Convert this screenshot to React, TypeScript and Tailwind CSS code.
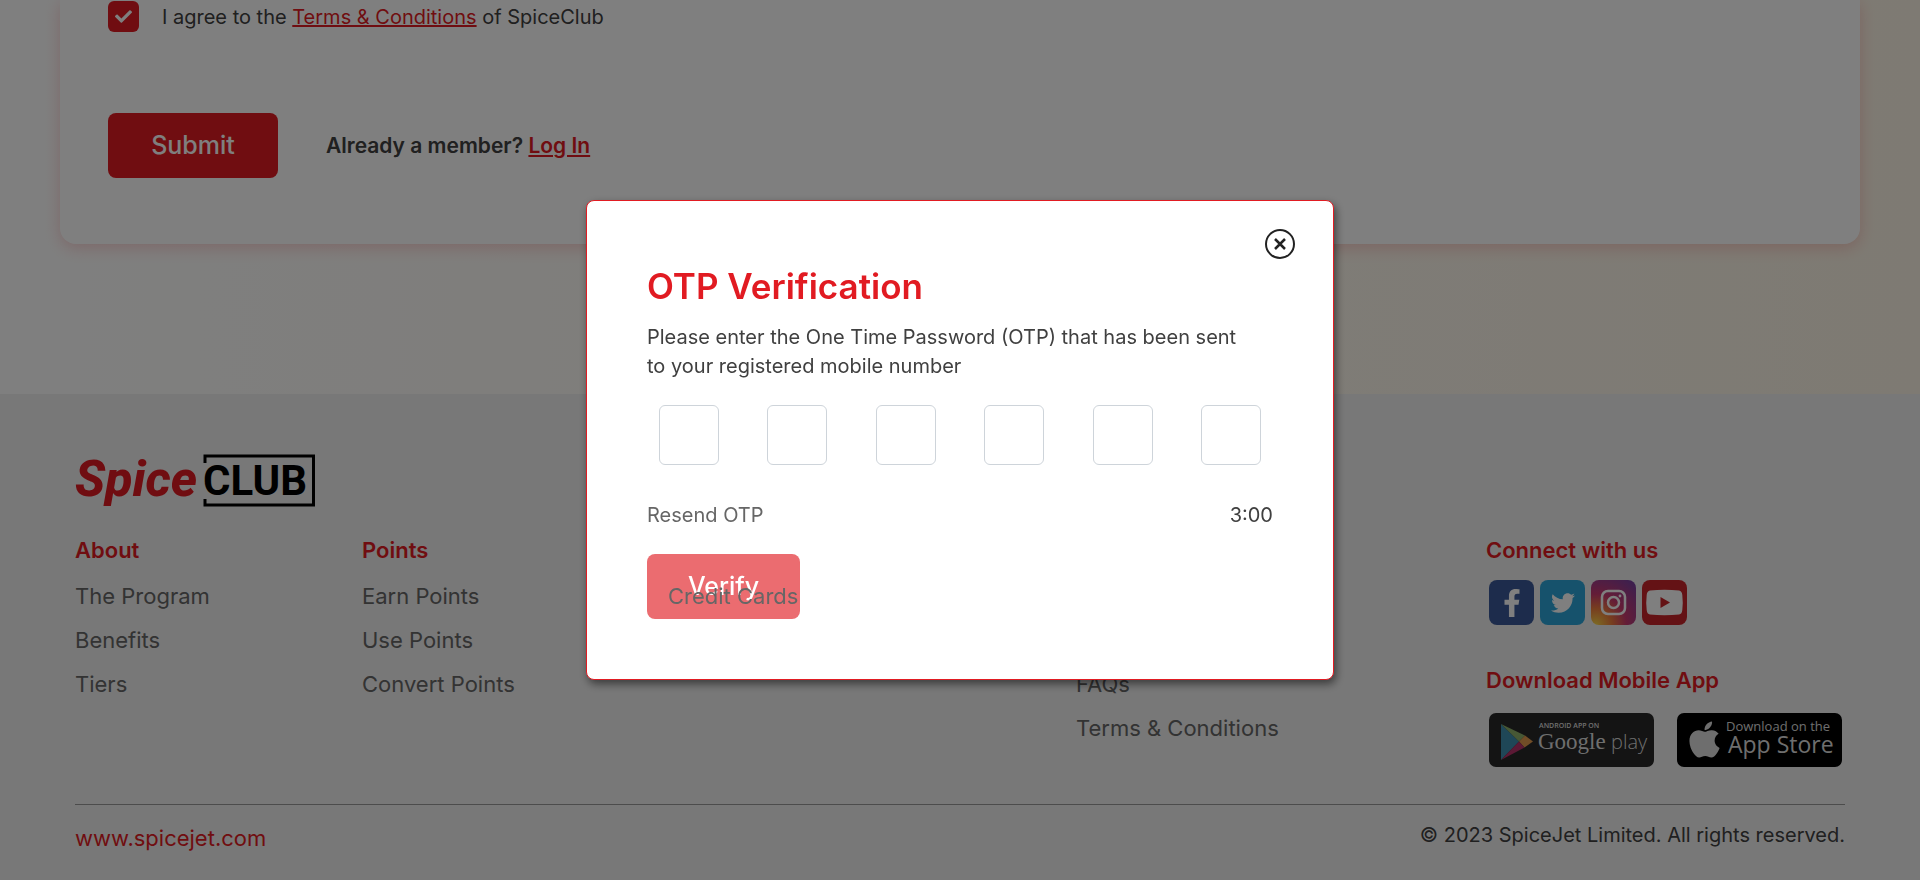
import React from "react";
import { FaApple, FaCheck, FaFacebookF, FaTwitter } from "react-icons/fa";

function FooterLink({ children, raised }: { children: React.ReactNode; raised?: boolean }) {
  return (
    <li className={raised ? "relative z-50" : ""}>
      <a href="#" className="whitespace-nowrap text-[#666]">
        {children}
      </a>
    </li>
  );
}

function Heading({ children }: { children: React.ReactNode }) {
  return <h3 className="text-[22px] leading-8 font-semibold text-[#e11b22]">{children}</h3>;
}

function Logo() {
  return (
    <svg width="242" height="60" viewBox="0 0 242 60" role="img" aria-label="SpiceClub">
      <text x="0" y="43" fontSize="50" fontWeight="800" fontStyle="italic" fill="#e11b22" fontFamily="Roboto, 'Liberation Sans', sans-serif">
        Spice
      </text>
      <path d="M130 10V3h108.500v49H130v-6" fill="none" stroke="#000" strokeWidth="3" />
      <text x="128" y="42" fontSize="42" fontWeight="700" fill="#000" fontFamily="Roboto, 'Liberation Sans', sans-serif">
        CLUB
      </text>
    </svg>
  );
}

function InstagramIcon() {
  return (
    <svg width="45" height="45" viewBox="0 0 45 45" aria-hidden="true">
      <defs>
        <radialGradient id="ig" cx="0.1" cy="1" r="1.25">
          <stop offset="0" stopColor="#f9d648" />
          <stop offset="0.3" stopColor="#ee7a3e" />
          <stop offset="0.55" stopColor="#c8396f" />
          <stop offset="1" stopColor="#7a3f9d" />
        </radialGradient>
      </defs>
      <rect width="45" height="45" rx="8" fill="url(#ig)" />
      <rect x="11" y="11" width="23" height="23" rx="6" fill="none" stroke="#fff" strokeWidth="2.500" />
      <circle cx="22.500" cy="22.500" r="5.500" fill="none" stroke="#fff" strokeWidth="2.500" />
      <circle cx="29" cy="16" r="1.400" fill="#fff" />
    </svg>
  );
}

function YoutubeIcon() {
  return (
    <svg width="45" height="45" viewBox="0 0 45 45" aria-hidden="true">
      <rect width="45" height="45" rx="8" fill="#c9252a" />
      <path d="M8 10.500Q22.500 9 37 10.500Q40 11 40.300 15Q41.200 22.500 40.300 30Q40 34 37 34.500Q22.500 36 8 34.500Q5 34 4.700 30Q3.800 22.500 4.700 15Q5 11 8 10.500Z" fill="#fff" />
      <path d="M18.500 17v11l9.500-5.500z" fill="#c9252a" />
    </svg>
  );
}

function GooglePlayBadge() {
  return (
    <svg width="165" height="54" viewBox="0 0 165 54" role="img" aria-label="Android app on Google play">
      <rect width="165" height="54" rx="7" fill="#282828" />
      <path d="M12 11v36l18-18.500z" fill="#3f8fae" />
      <path d="M12 11l18 17.500 6-6z" fill="#8fb06a" />
      <path d="M36 22.500l8 6-8.500 6-5.500-6z" fill="#e39a4e" />
      <path d="M12 47l18-18.500 5.500 6z" fill="#b8336a" />
      <text x="50" y="15" fontSize="7" fontWeight="600" fill="#ddd" fontFamily="'Open Sans', sans-serif">
        ANDROID APP ON
      </text>
      <text x="49" y="36" fontSize="23" fill="#ddd" fontFamily="'Liberation Serif', serif">
        Google
      </text>
      <text x="122" y="36" fontSize="20" fontWeight="300" fill="#ddd" fontFamily="'Open Sans', sans-serif">
        play
      </text>
    </svg>
  );
}

function AppStoreBadge() {
  return (
    <svg width="165" height="54" viewBox="0 0 165 54" role="img" aria-label="Download on the App Store">
      <rect width="165" height="54" rx="7" fill="#000" />
      <FaApple x="7" y="6" size={41} color="#ddd" />
      <text x="49" y="18" fontSize="13" fill="#ddd" fontFamily="'Open Sans', sans-serif">
        Download on the
      </text>
      <text x="51" y="40" fontSize="23" fontWeight="500" fill="#ddd" fontFamily="'Open Sans', sans-serif">
        App Store
      </text>
    </svg>
  );
}

function OtpDialog() {
  return (
    <div className="fixed inset-0 z-40 flex items-center justify-center bg-black/50">
      <div
        role="dialog"
        aria-labelledby="otp-title"
        className="relative w-[748px] rounded-lg border border-[#e11b22] bg-white p-[60px] shadow-[2px_4px_8px_rgba(0,0,0,0.5)]"
      >
        <button type="button" aria-label="Close" className="absolute top-[27px] right-[37px]">
          <svg width="32" height="32" viewBox="0 0 32 32" fill="none" stroke="#222">
            <circle cx="16" cy="16" r="14" strokeWidth="2" />
            <path d="M11 11l10 10M21 11l-10 10" strokeWidth="2.500" />
          </svg>
        </button>
        <h2 id="otp-title" className="text-[35px] leading-[50px] font-semibold text-[#e11b22]">
          OTP Verification
        </h2>
        <p className="mt-3 pr-5 text-[20px] leading-[29px] text-[#404040]">
          Please enter the One Time Password (OTP) that has been sent to your registered mobile number
        </p>
        <div className="mt-6 flex justify-between px-3">
          {[1, 2, 3, 4, 5, 6].map((n) => (
            <input
              key={n}
              type="text"
              maxLength={1}
              aria-label={"OTP digit " + n}
              className="size-[60px] rounded-md border border-[#ced4da] text-center text-xl"
            />
          ))}
        </div>
        <div className="mt-[35px] flex justify-between text-[20px] leading-[30px]">
          <button type="button" className="text-[#666]">
            Resend OTP
          </button>
          <span className="text-[#404040]">3:00</span>
        </div>
        <button type="button" className="mt-6 block h-[65px] w-[153px] rounded-lg bg-[#eb6c70] text-[25px] font-medium text-white">
          Verify
        </button>
      </div>
    </div>
  );
}

export default function App() {
  return (
    <div className="min-h-screen bg-[#f0f0f0] [font-family:Inter,'Noto_Sans',sans-serif]">
      <main className="bg-linear-to-r from-white to-[#fdf5e6] px-[60px] pb-[150px]">
        <form className="rounded-b-2xl bg-white px-12 pt-px pb-[66px] shadow-[0_4px_16px_rgba(225,27,34,0.2)]">
          <div className="flex items-center gap-[23px]">
            <span className="relative size-[31px]">
              <input id="agree" type="checkbox" defaultChecked className="size-[31px] appearance-none rounded-md bg-[#e11b22]" />
              <FaCheck className="pointer-events-none absolute top-[7px] left-[7px] text-white" size={17} />
            </span>
            <label htmlFor="agree" className="text-[20px] leading-[30px] text-[#404040]">
              I agree to the{" "}
              <a href="#" className="text-[#e11b22] underline">
                Terms &amp; Conditions
              </a>{" "}
              of SpiceClub
            </label>
          </div>
          <div className="mt-[81px] flex items-center gap-12">
            <button type="button" className="h-[65px] w-[170px] rounded-lg bg-[#e11b22] text-[25px] font-medium text-white">
              Submit
            </button>
            <p className="text-[21px] font-semibold text-[#404040]">
              Already a member?{" "}
              <a href="#" className="text-[#e11b22] underline">
                Log In
              </a>
            </p>
          </div>
        </form>
      </main>

      <footer className="px-[75px] pt-[59px]">
        <Logo />
        <div className="mt-[21px] grid grid-cols-[287px_306px_408px_410px_1fr] items-start">
          <div>
            <Heading>About</Heading>
            <ul className="mt-2 text-[22px] leading-[44px]">
              <FooterLink>The Program</FooterLink>
              <FooterLink>Benefits</FooterLink>
              <FooterLink>Tiers</FooterLink>
            </ul>
          </div>
          <div>
            <Heading>Points</Heading>
            <ul className="mt-2 text-[22px] leading-[44px]">
              <FooterLink>Earn Points</FooterLink>
              <FooterLink>Use Points</FooterLink>
              <FooterLink>Convert Points</FooterLink>
            </ul>
          </div>
          <ul className="mt-10 text-[22px] leading-[44px]">
            <FooterLink raised>Credit Cards</FooterLink>
          </ul>
          <ul className="mt-32 text-[22px] leading-[44px]">
            <FooterLink>FAQs</FooterLink>
            <FooterLink>Terms &amp; Conditions</FooterLink>
          </ul>
          <div>
            <Heading>Connect with us</Heading>
            <div className="mt-[14px] ml-[3px] flex gap-[6px]">
              <a href="#" aria-label="Facebook" className="flex size-[45px] items-center justify-center rounded-lg bg-[#3b5998] text-white">
                <FaFacebookF size={28} />
              </a>
              <a href="#" aria-label="Twitter" className="flex size-[45px] items-center justify-center rounded-lg bg-[#2ca5d8] text-white">
                <FaTwitter size={24} />
              </a>
              <a href="#" aria-label="Instagram">
                <InstagramIcon />
              </a>
              <a href="#" aria-label="YouTube">
                <YoutubeIcon />
              </a>
            </div>
            <div className="mt-[39px]">
              <Heading>Download Mobile App</Heading>
            </div>
            <div className="mt-[17px] ml-[3px] flex gap-[23px]">
              <a href="#">
                <GooglePlayBadge />
              </a>
              <a href="#">
                <AppStoreBadge />
              </a>
            </div>
          </div>
        </div>
        <div className="mt-[37px] flex items-start justify-between border-t border-[#999] pt-[14px]">
          <a href="#" className="pt-[3px] text-[22px] leading-8 text-[#e11b22]">
            www.spicejet.com
          </a>
          <p className="text-[20px] leading-8 text-[#404040]">© 2023 SpiceJet Limited. All rights reserved.</p>
        </div>
      </footer>
      <OtpDialog />
    </div>
  );
}
